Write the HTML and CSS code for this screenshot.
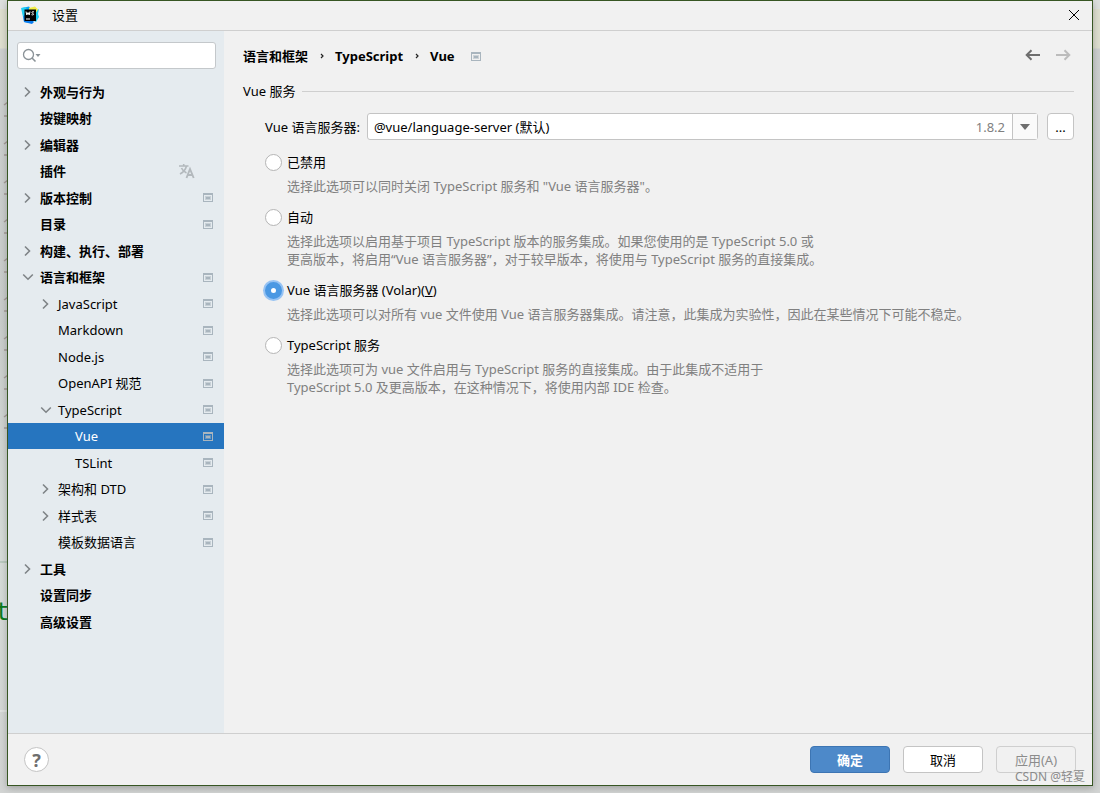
FILE: index.html
```
<!DOCTYPE html>
<html lang="zh-CN">
<head>
<meta charset="utf-8">
<title>设置</title>
<link rel="stylesheet" href="styles.css">
</head>
<body>
<svg class="defs" aria-hidden="true">
  <symbol id="right" viewBox="0 0 12 12"><path d="M3 1.500l4.500 4.500L3 10.500" fill="none" stroke="#7f8487" stroke-width="1.600"/></symbol>
  <symbol id="down" viewBox="0 0 12 12"><path d="M1.200 3.500l4.800 4.700 4.800-4.700" fill="none" stroke="#7f8487" stroke-width="1.600"/></symbol>
  <symbol id="proj" viewBox="0 0 10 9"><path fill="#a9b5be" fill-rule="evenodd" d="M0 0h10v9H0zM1 2v6h8V2z"/><path fill="#a9b5be" opacity=".5" d="M2 3h6v4H2z"/><path fill="#a9b5be" d="M3 4h4v2H3z"/></symbol>
</svg>
<svg class="marks" aria-hidden="true">
  <defs><pattern id="mark" y="100" width="8" height="39" patternUnits="userSpaceOnUse"><path d="M4 5l4-3M4 16h4" fill="none" stroke="#a59c99" stroke-width="1.500"/></pattern></defs>
  <path fill="url(#mark)" d="M0 100h8v340H0z"/>
  <path d="M0 562h8" stroke="#9fb9a6"/><path d="M0 711h8" stroke="#eef0ee"/>
</svg>
<span class="backdrop-text" aria-hidden="true">t</span>
<div class="window">
  <header class="titlebar">
    <svg class="logo" viewBox="0 0 18 18" aria-hidden="true">
      <path fill="#0ba3ee" d="M1 2l7-1.500 2 3L9 17l-6-1z"/><path fill="#087cf0" d="M2 8l7 4 4 4-2 2-8-2z"/><path fill="#21d0f5" d="M0 2l5-1 1 4-4 6zM13 6l5-3-1 5 1 3-3 5-4-2z"/><path fill="#f3ee45" d="M8 2l6-1.500 3 3-2 3-7-1z"/><path fill="#000" d="M3.500 3.500h11.500v11.500H3.500z"/>
      <path d="M5 5.500l.8 3.500L7 6.500 8.200 9l.8-3.500M13 6c-2-1-2.800.8-1.500 1.300 1.800.5 1.300 2.200-1 1.400M5 13h4" fill="none" stroke="#fff" stroke-width="1"/>
    </svg>
    <h1 class="title">设置</h1>
    <button class="close" aria-label="关闭"><svg viewBox="0 0 12 12"><path d="M1 1l10 10M11 1L1 11" stroke="#000" stroke-width="1"/></svg></button>
  </header>
  <div class="body">
    <aside class="sidebar">
      <label class="search">
        <svg class="lens" viewBox="0 0 20 16" aria-hidden="true"><circle cx="6.500" cy="6.500" r="5" fill="none" stroke="#8a9297" stroke-width="1.300"/><path d="M10 10l3.500 3.500" stroke="#8a9297" stroke-width="1.600"/><path d="M13.500 6h5L16 9z" fill="#8a9297"/></svg>
        <input type="search" aria-label="搜索">
      </label>
      <nav aria-label="设置">
        <ul class="tree">
          <li><a class="row top" href="#"><svg class="arrow"><use href="#right"/></svg><span class="name">外观与行为</span></a></li>
          <li><a class="row top" href="#"><span class="arrow"></span><span class="name">按键映射</span></a></li>
          <li><a class="row top" href="#"><svg class="arrow"><use href="#right"/></svg><span class="name">编辑器</span></a></li>
          <li><a class="row top" href="#"><span class="arrow"></span><span class="name">插件</span><svg class="lang" viewBox="0 0 16 16" aria-hidden="true"><path d="M0 3h9.500M4.700 1v2M7.500 3C6.500 7 4 9.500 1 11M2.500 5C3.500 7.500 5.500 9 7.500 10" fill="none" stroke="#b3b9bd" stroke-width="1.600"/><path d="M7.500 15l3.500-9 3.700 9M8.700 12h5" fill="none" stroke="#b3b9bd" stroke-width="1.900"/></svg></a></li>
          <li><a class="row top" href="#"><svg class="arrow"><use href="#right"/></svg><span class="name">版本控制</span><svg class="proj"><use href="#proj"/></svg></a></li>
          <li><a class="row top" href="#"><span class="arrow"></span><span class="name">目录</span><svg class="proj"><use href="#proj"/></svg></a></li>
          <li><a class="row top" href="#"><svg class="arrow"><use href="#right"/></svg><span class="name">构建、执行、部署</span></a></li>
          <li><a class="row top" href="#"><svg class="arrow"><use href="#down"/></svg><span class="name">语言和框架</span><svg class="proj"><use href="#proj"/></svg></a></li>
          <li><a class="row sub" href="#"><svg class="arrow"><use href="#right"/></svg><span class="name">JavaScript</span><svg class="proj"><use href="#proj"/></svg></a></li>
          <li><a class="row sub" href="#"><span class="arrow"></span><span class="name">Markdown</span><svg class="proj"><use href="#proj"/></svg></a></li>
          <li><a class="row sub" href="#"><span class="arrow"></span><span class="name">Node.js</span><svg class="proj"><use href="#proj"/></svg></a></li>
          <li><a class="row sub" href="#"><span class="arrow"></span><span class="name">OpenAPI 规范</span><svg class="proj"><use href="#proj"/></svg></a></li>
          <li><a class="row sub" href="#"><svg class="arrow"><use href="#down"/></svg><span class="name">TypeScript</span><svg class="proj"><use href="#proj"/></svg></a></li>
          <li><a class="row leaf selected" href="#" aria-current="page"><span class="arrow"></span><span class="name">Vue</span><svg class="proj"><use href="#proj"/></svg></a></li>
          <li><a class="row leaf" href="#"><span class="arrow"></span><span class="name">TSLint</span><svg class="proj"><use href="#proj"/></svg></a></li>
          <li><a class="row sub" href="#"><svg class="arrow"><use href="#right"/></svg><span class="name">架构和 DTD</span><svg class="proj"><use href="#proj"/></svg></a></li>
          <li><a class="row sub" href="#"><svg class="arrow"><use href="#right"/></svg><span class="name">样式表</span><svg class="proj"><use href="#proj"/></svg></a></li>
          <li><a class="row sub" href="#"><span class="arrow"></span><span class="name">模板数据语言</span><svg class="proj"><use href="#proj"/></svg></a></li>
          <li><a class="row top" href="#"><svg class="arrow"><use href="#right"/></svg><span class="name">工具</span></a></li>
          <li><a class="row top" href="#"><span class="arrow"></span><span class="name">设置同步</span></a></li>
          <li><a class="row top" href="#"><span class="arrow"></span><span class="name">高级设置</span></a></li>
        </ul>
      </nav>
    </aside>
    <main class="content">
      <div class="crumbs">
        <span>语言和框架</span><svg class="sep" viewBox="0 0 4 6"><path d="M1 1l2 2-2 2" fill="none" stroke="#222" stroke-width="1.200"/></svg><span>TypeScript</span><svg class="sep" viewBox="0 0 4 6"><path d="M1 1l2 2-2 2" fill="none" stroke="#222" stroke-width="1.200"/></svg><span>Vue</span><svg class="proj"><use href="#proj"/></svg>
        <div class="history">
          <button class="nav" aria-label="后退"><svg viewBox="0 0 16 12"><path d="M15 6H2M6.500 1.200L1.700 6l4.800 4.800" fill="none" stroke="#6e6e6e" stroke-width="2"/></svg></button>
          <button class="nav" aria-label="前进" disabled><svg viewBox="0 0 16 12"><path d="M1 6h13M9.500 1.200L14.300 6l-4.800 4.800" fill="none" stroke="#bcbcbc" stroke-width="2"/></svg></button>
        </div>
      </div>
      <h2 class="section"><span>Vue 服务</span></h2>
      <div class="field">
        <label for="server">Vue 语言服务器:</label>
        <div class="combo">
          <input id="server" type="text" value="@vue/language-server (默认)">
          <span class="version">1.8.2</span>
          <button class="drop" aria-label="展开"><svg viewBox="0 0 10 6"><path d="M0 0h10L5 6z" fill="#6e6e6e"/></svg></button>
        </div>
        <button class="more">...</button>
      </div>
      <div class="options">
        <div class="option">
          <label><input type="radio" name="mode">已禁用</label>
          <p>选择此选项可以同时关闭 TypeScript 服务和 "Vue 语言服务器"。</p>
        </div>
        <div class="option">
          <label><input type="radio" name="mode">自动</label>
          <p>选择此选项以启用基于项目 TypeScript 版本的服务集成。如果您使用的是 TypeScript 5.0 或<br>更高版本，将启用“Vue 语言服务器”，对于较早版本，将使用与 TypeScript 服务的直接集成。</p>
        </div>
        <div class="option">
          <label><input type="radio" name="mode" checked><span>Vue 语言服务器 (Volar)(<u>V</u>)</span></label>
          <p>选择此选项可以对所有 vue 文件使用 Vue 语言服务器集成。请注意，此集成为实验性，因此在某些情况下可能不稳定。</p>
        </div>
        <div class="option">
          <label><input type="radio" name="mode">TypeScript 服务</label>
          <p>选择此选项可为 vue 文件启用与 TypeScript 服务的直接集成。由于此集成不适用于<br>TypeScript 5.0 及更高版本，在这种情况下，将使用内部 IDE 检查。</p>
        </div>
      </div>
    </main>
  </div>
  <footer class="footer">
    <button class="help" aria-label="帮助">?</button>
    <button class="btn primary">确定</button>
    <button class="btn">取消</button>
    <button class="btn" disabled>应用(A)</button>
  </footer>
  <span class="watermark">CSDN @轻夏</span>
</div>
</body>
</html>
```
FILE: styles.css
```
* { box-sizing: border-box; }
body {
  margin: 0;
  padding: 0 7px 7px;
  min-height: 100vh;
  display: flex;
  background: linear-gradient(#dde0de 9px, #dedfcf 9px, #dedfcf 48px, #cdd0cf 49px, #c9cdcb 40%, #d6dcd8 70%, #d2d4d3);
  color: #000;
  font: 13px/18px "Noto Sans", "Noto Sans CJK SC", sans-serif;
  overflow: hidden;
}
input, button { font: inherit; color: inherit; }
button { padding: 0; }
.defs { position: absolute; width: 0; height: 0; }
.marks { position: absolute; left: 0; top: 0; width: 8px; height: 100%; }
.backdrop-text {
  position: absolute;
  left: -5px;
  top: 600px;
  color: #0a7a1c;
  font: 24px/24px "DejaVu Sans Mono", monospace;
}
.window {
  position: relative;
  flex: 1;
  display: flex;
  flex-direction: column;
  background: #f1f1f1;
  border: 1px solid #375623;
  box-shadow: 0 2px 7px rgba(0, 0, 0, .25);
}
.titlebar {
  display: flex;
  align-items: center;
  height: 30px;
  padding: 0 12px 2px 13px;
  border-bottom: 1px solid #cfcfcf;
}
.logo { width: 18px; height: 18px; }
.title { margin: 0 auto 0 13px; font-size: 13px; font-weight: 400; }
.close { width: 12px; height: 12px; border: 0; background: none; }
.close svg, .nav svg, .drop svg { display: block; width: 100%; }
.body { flex: 1; display: flex; }
.sidebar { width: 216px; padding: 11px 0; background: #e5ebef; }
.search {
  display: flex;
  align-items: center;
  height: 27px;
  margin: 0 8px 9px 9px;
  padding: 0 4px;
  background: #fff;
  border: 1px solid #c4c8cb;
  border-radius: 3px;
}
.lens { flex: none; width: 20px; height: 16px; }
.search input { flex: 1; min-width: 0; border: 0; outline: 0; background: none; }
.tree { margin: 0; padding: 0; list-style: none; }
.tree li { height: 26px; }
.tree li:nth-child(odd) { height: 27px; }
.row {
  display: flex;
  align-items: center;
  height: 100%;
  padding: 0 11px 0 14px;
  color: #000;
  text-decoration: none;
}
.sub { padding-left: 32px; }
.leaf { padding-left: 49px; }
.top { font-weight: 700; }
.selected { background: #2675bf; color: #fff; }
.arrow { flex: none; width: 12px; height: 12px; margin-right: 6px; }
.name { flex: 1; }
.proj { width: 10px; height: 9px; }
.lang { width: 16px; height: 16px; margin-right: 18px; }
.content { flex: 1; padding: 15px 18px 16px 19px; }
.crumbs { display: flex; align-items: center; height: 20px; font-weight: 700; }
.sep { width: 4px; height: 6px; margin: 0 11px 0 12px; }
.crumbs .proj { margin-left: 16px; }
.history { display: flex; gap: 14px; margin-left: auto; padding: 0 3px 2px 0; }
.nav { width: 16px; height: 12px; border: 0; background: none; }
.section {
  display: flex;
  align-items: center;
  gap: 7px;
  margin: 16px 0 13px;
  font-size: 13px;
  font-weight: 400;
}
.section::after { content: ""; flex: 1; height: 1px; background: #cfcfcf; }
.field { display: flex; align-items: center; padding-left: 22px; }
.field label { margin-right: 7px; }
.combo {
  flex: 1;
  display: flex;
  align-items: center;
  height: 27px;
  background: #fff;
  border: 1px solid #c4c4c4;
  border-radius: 3px;
}
.combo input { flex: 1; min-width: 0; padding: 0 6px; border: 0; outline: 0; background: none; }
.version { margin-right: 7px; color: #808080; }
.drop {
  width: 25px;
  height: 100%;
  padding: 0 7px;
  border: 0;
  border-left: 1px solid #c4c4c4;
  background: #fafafa;
}
.more { width: 27px; height: 27px; margin-left: 9px; background: #fff; border: 1px solid #c4c4c4; border-radius: 4px; }
.options { display: grid; gap: 10px; padding: 10px 0 0 22px; }
.option label { display: flex; align-items: center; height: 24px; gap: 5px; }
.option input {
  appearance: none;
  width: 17px;
  height: 17px;
  margin: 0;
  background: #fff;
  border: 1px solid #b5b5b5;
  border-radius: 50%;
}
.option input:checked {
  border: 6px solid #4a98e3;
  box-shadow: 0 0 0 2px #97c3f3;
}
.option p { margin: 3px 0 0 22px; color: #808080; }
.footer {
  display: flex;
  align-items: center;
  gap: 13px;
  height: 52px;
  padding: 0 16px;
  border-top: 1px solid #cfcfcf;
}
.help {
  width: 25px;
  height: 25px;
  margin-right: auto;
  background: #fff;
  border: 1px solid #c4c4c4;
  border-radius: 50%;
  color: #6e6e6e;
  font-size: 18px;
  font-weight: 700;
}
.btn { width: 80px; height: 27px; background: #fff; border: 1px solid #c4c4c4; border-radius: 4px; }
.btn:disabled { background: #f1f1f1; border-color: #cfcfcf; color: #8c8c8c; }
.primary { background: #4d89c9; border-color: #3d75b3; color: #fff; font-weight: 700; }
.watermark { position: absolute; right: 7px; bottom: 0; color: #8a8a8a; font-size: 12px; line-height: 16px; }
```
